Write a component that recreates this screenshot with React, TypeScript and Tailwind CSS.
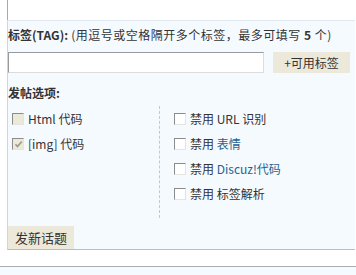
import React from "react";

const font = { fontFamily: '"Noto Sans CJK SC", "Liberation Sans", sans-serif' };

function Box({ disabled, checked }: { disabled?: boolean; checked?: boolean }) {
  return (
    <span
      className={
        "relative inline-block w-[12px] h-[12px] shrink-0 border-t border-l border-t-[#8c8c8c] border-l-[#8c8c8c] border-b border-r border-b-[#e4e4e4] border-r-[#e4e4e4] " +
        (disabled ? "bg-[#ece9d8]" : "bg-white")
      }
    >
      {checked && (
        <svg className="absolute left-[1px] top-[1px]" width="9" height="9" viewBox="0 0 9 9">
          <path d="M1.5 4.2 L3.5 6.5 L7.8 1.5" fill="none" stroke="#9a9a8a" strokeWidth="1.6" />
        </svg>
      )}
    </span>
  );
}

function Row({ children, disabled, checked }: { children: React.ReactNode; disabled?: boolean; checked?: boolean }) {
  return (
    <div className="h-[25px] flex items-center gap-[4px] text-[12px] leading-[16px] text-[#333]">
      <Box disabled={disabled} checked={checked} />
      <span>{children}</span>
    </div>
  );
}

export default function App() {
  return (
    <div className="w-[356px] h-[275px] bg-white overflow-hidden relative" style={font}>
      <div className="ml-[7px] mr-[3px] h-[20px] border-l border-[#a8a8a8] bg-white" />
      <div className="ml-[7px] mr-[1px] bg-[#f5faff] border-t border-t-[#dfe8f0] border-l border-l-[#cfd6de] border-b border-b-[#b8bec4]">
        <div className="pt-[6px] text-[12px] leading-[16px] text-[#333] whitespace-nowrap">
          <span className="font-bold">标签(TAG):</span>
          <span className="tracking-[0.5px]"> (用逗号或空格隔开多个标签，最多可填写 <b>5</b> 个)</span>
        </div>
        <div className="mt-[9px] flex items-center">
          <div className="w-[256px] h-[21px] bg-white border-t border-l border-t-[#9a9a9a] border-l-[#9a9a9a] border-b border-r border-b-[#dcdcdc] border-r-[#dcdcdc]" />
          <div className="ml-[9px] w-[77px] h-[21px] bg-[#ede9da] flex items-center justify-center text-[12px] leading-[16px] text-[#333]">
            +可用标签
          </div>
        </div>
        <div className="mt-[12px] text-[12px] leading-[16px] font-bold text-[#333]">发帖选项:</div>
        <div className="mt-[5px] flex">
          <div className="w-[152px] pl-[4px] pb-[12px] border-r border-dashed border-[#c4c8cc]">
            <Row disabled>Html 代码</Row>
            <Row disabled checked>[img] 代码</Row>
          </div>
          <div className="pl-[14px] pb-[12px]">
            <Row>禁用 URL 识别</Row>
            <Row>
              禁用 <span className="text-[#1f6390]">表情</span>
            </Row>
            <Row>
              禁用 <span className="text-[#1f6390]">Discuz!代码</span>
            </Row>
            <Row>禁用 标签解析</Row>
          </div>
        </div>
        <div className="mt-[8px] w-[66px] h-[23px] bg-[#ede9da] flex items-center justify-center text-[13px] leading-[16px] text-[#333]">
          发新话题
        </div>
      </div>
      <div className="mt-[16px] border-t border-[#a9aeb3] h-[12px] bg-[#f5faff]" />
    </div>
  );
}
